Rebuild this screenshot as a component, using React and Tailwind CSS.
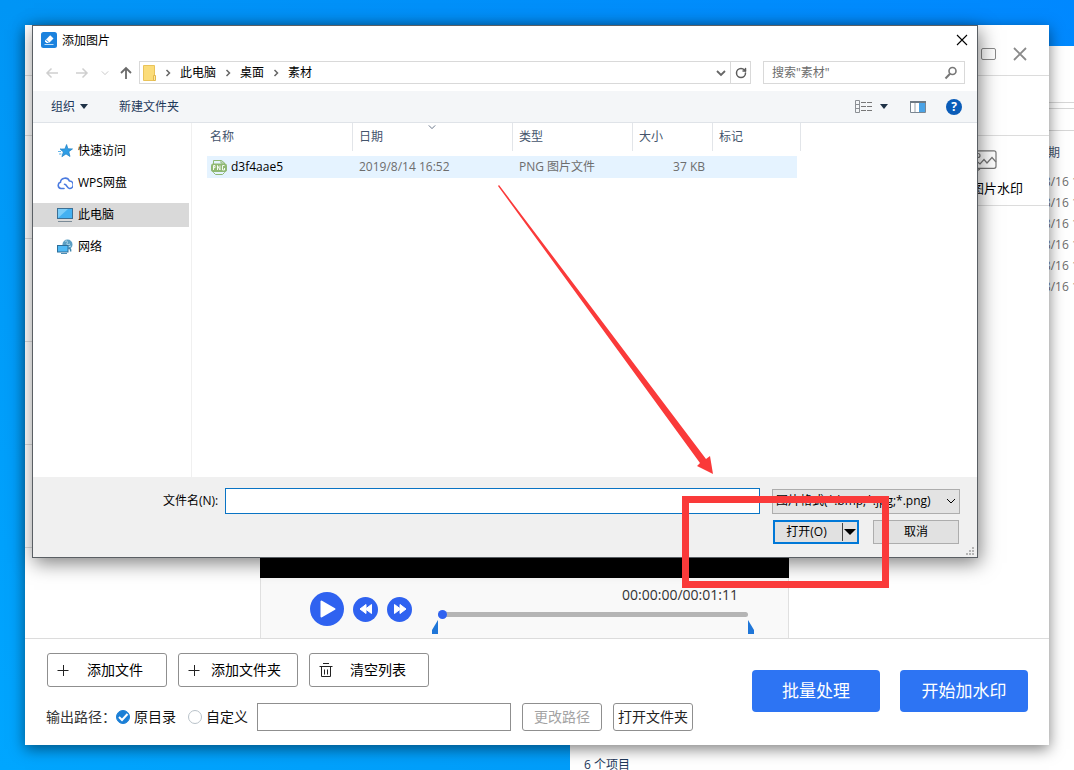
import { RotateCw } from 'lucide-react';

const files = [{ name: 'd3f4aae5', date: '2019/8/14 16:52', type: 'PNG 图片文件', size: '37 KB' }];

const explorerRows = ['16:52', '16:51', '16:50', '16:48', '16:45', '16:42'];

const sidebarItems = [
  { label: '快速访问', icon: 'star' },
  { label: 'WPS网盘', icon: 'cloud' },
  { label: '此电脑', icon: 'pc', active: true },
  { label: '网络', icon: 'network' },
];

const SidebarIcon = ({ name }) => {
  if (name === 'star') {
    return (
      <svg viewBox="0 0 16 16" className="h-4 w-4">
        <path d="M9.6 1.5l1.3 4.3 4.6.1-3.7 2.8 1.2 4.8-4-2.6-4.1 2.8 1.5-4.8L3 6.100l4.900-.2z" fill="#2f9ee6" stroke="#1c7fc4" strokeWidth=".7" />
        <path d="M1 8.500h3M2 11h2.500M3 6h1" stroke="#63b5ea" />
      </svg>
    );
  }
  if (name === 'cloud') {
    return (
      <svg viewBox="0 0 16 16" className="h-4 w-4" fill="none" stroke="#4b7be0" strokeWidth="1.6" strokeLinecap="round">
        <path d="M7 13.500H4A3.200 3.200 0 0 1 3.400 7.300 4.700 4.700 0 0 1 12.400 6 3.700 3.700 0 0 1 12.500 13.500C10 13.500 10 9.300 7.500 9.300" />
      </svg>
    );
  }
  if (name === 'pc') {
    return (
      <svg viewBox="0 0 16 16" className="h-4 w-4">
        <rect x=".5" y="1.500" width="15" height="10" fill="#43b1f2" stroke="#3c6f94" />
        <path d="M1 11V2h10z" fill="#7bcdf9" />
        <path d="M1 14.500h14" stroke="#7a8a96" />
      </svg>
    );
  }
  return (
    <svg viewBox="0 0 16 16" className="h-4 w-4">
      <circle cx="10.500" cy="5.500" r="5" fill="#5b9fc4" />
      <path d="M8 2.500c2-1.500 3 .5 2 2s2 1.500 3 .5M11 8l3-1" stroke="#b9dff0" fill="none" />
      <path d="M12 9.500c1.500 0 2 1 1.500 3" stroke="#3f86ad" fill="none" strokeWidth="1.500" />
      <rect x=".5" y="6.500" width="10.500" height="6.500" fill="#4fb9f5" stroke="#2f6f99" />
      <path d="M4 14.500h6" stroke="#4a8db5" />
    </svg>
  );
};

const Chevron = ({ className }) => (
  <svg viewBox="0 0 10 10" className={className} fill="none" stroke="currentColor">
    <path d="M1 3l4 4 4-4" />
  </svg>
);

const Caret = () => (
  <svg viewBox="0 0 8 5" className="h-[5px] w-2" fill="#1f3247">
    <path d="M0 0h8L4 5z" />
  </svg>
);

const Crumb = ({ children }) => (
  <>
    <svg viewBox="0 0 6 8" className="mx-[9px] h-2 w-1.5 shrink-0" fill="none" stroke="#666" strokeWidth="1.500">
      <path d="M1.500 1l3 3-3 3" />
    </svg>
    <button type="button" className="whitespace-nowrap">{children}</button>
  </>
);

const ExplorerWindow = () => (
  <section className="absolute top-[46px] right-0 bottom-0 left-[570px] flex flex-col overflow-hidden bg-white text-xs">
    <div className="h-14 shrink-0" />
    <div className="h-[7px] shrink-0 border-y border-[#d6d6d6]" />
    <div className="h-[22px] shrink-0 border-b border-[#d6d6d6]" />
    <table className="mt-3 ml-[442px] table-fixed border-collapse text-left whitespace-nowrap text-[#6d6d6d]">
      <thead>
        <tr className="h-[19px] text-[#44546c]">
          <th className="p-0 font-normal">修改日期</th>
        </tr>
      </thead>
      <tbody>
        <tr className="h-[9px]" />
        {explorerRows.map((time) => (
          <tr key={time} className="h-[21px]">
            <td className="p-0">2019/8/16 {time}</td>
          </tr>
        ))}
      </tbody>
    </table>
    <div className="mt-auto h-3.5 shrink-0 pl-3.5 leading-[18px] text-[#1e395b]">6 个项目</div>
  </section>
);

const Player = () => (
  <div className="flex flex-1 flex-col">
    <div className="flex-1 bg-black" />
    <div className="flex h-[60px] border-x border-[#e0e0e0] bg-[#f9f9f9] pr-[34px] pl-[49px]">
      <div className="flex items-center gap-[9px] pt-0.5">
        <button type="button" aria-label="播放" className="flex h-[34px] w-[34px] items-center justify-center rounded-full bg-[#2f62f0]">
          <svg viewBox="0 0 16 18" className="ml-0.5 h-[18px] w-4" fill="#fff" stroke="#fff" strokeWidth="2" strokeLinejoin="round">
            <path d="M1.500 1.500v15L14.500 9z" />
          </svg>
        </button>
        <button type="button" aria-label="快退" className="flex h-[25px] w-[25px] items-center justify-center rounded-full bg-[#2f62f0]">
          <svg viewBox="0 0 14 10" className="h-2.5 w-3.5" fill="#fff" stroke="#fff" strokeLinejoin="round">
            <path d="M7 .5v9L1 5zM12.500.5v9L6.500 5z" />
          </svg>
        </button>
        <button type="button" aria-label="快进" className="flex h-[25px] w-[25px] items-center justify-center rounded-full bg-[#2f62f0]">
          <svg viewBox="0 0 14 10" className="h-2.5 w-3.5" fill="#fff" stroke="#fff" strokeLinejoin="round">
            <path d="M1.500.5v9l6-4.500zM7 .5v9L13 5z" />
          </svg>
        </button>
      </div>
      <div className="ml-5 flex flex-1 flex-col pt-[7px]">
        <div className="pr-4 text-right text-sm leading-5 text-[#333]">00:00:00/00:01:11</div>
        <div className="flex px-1.5 pt-[3px]">
          <input
            type="range"
            aria-label="播放进度"
            defaultValue="0"
            className="h-3 w-full appearance-none bg-transparent [&::-webkit-slider-runnable-track]:h-[5px] [&::-webkit-slider-runnable-track]:rounded-full [&::-webkit-slider-runnable-track]:bg-[#b5b5b5] [&::-webkit-slider-thumb]:-mt-0.5 [&::-webkit-slider-thumb]:h-[9px] [&::-webkit-slider-thumb]:w-[9px] [&::-webkit-slider-thumb]:appearance-none [&::-webkit-slider-thumb]:rounded-full [&::-webkit-slider-thumb]:bg-[#2f62f0]"
          />
        </div>
        <div className="flex justify-between">
          <svg viewBox="0 0 6 14" className="h-3.5 w-1.5" fill="#1f76d8">
            <path d="M6 0v14H0v-4z" />
          </svg>
          <svg viewBox="0 0 6 14" className="h-3.5 w-1.5" fill="#1f76d8">
            <path d="M0 0v14h6v-4z" />
          </svg>
        </div>
      </div>
    </div>
  </div>
);

const ToolButton = ({ icon, children }) => (
  <button type="button" className="flex h-[34px] w-[120px] items-center rounded-[3px] border border-[#8f8f8f] bg-white pl-2 text-sm">
    {icon}
    <span className="flex-1 pr-1.5 text-center">{children}</span>
  </button>
);

const PlusIcon = () => (
  <svg viewBox="0 0 14 14" className="h-3.5 w-3.5 shrink-0" stroke="#222">
    <path d="M1.500 7.500h11M7.500 2v11" />
  </svg>
);

const TrashIcon = () => (
  <svg viewBox="0 0 16 16" className="h-4 w-4 shrink-0" fill="none" stroke="#222">
    <path d="M5 1.500h6M1.500 4.500h13M3.500 4.500v10h9v-10M6.500 7.500v5M9.500 7.500v5" />
  </svg>
);

const radioClass =
  'h-3.5 w-3.5 shrink-0 appearance-none rounded-full border border-[#b9c2c9] bg-white';

const AppWindow = () => (
  <section className="absolute inset-[25px] flex flex-col bg-white shadow-[0_4px_14px_rgba(0,0,0,0.5)]">
    <div className="flex h-[51px] shrink-0 items-center justify-end gap-[17px] border-b border-[#dcdcdc] pt-2 pr-[22px]">
      <button type="button" aria-label="最大化" className="h-3 w-[15px] rounded-xs border border-[#8a8a8a]" />
      <button type="button" aria-label="关闭" className="text-[#8a8a8a]">
        <svg viewBox="0 0 14 14" className="h-3.5 w-3.5" stroke="currentColor" strokeWidth="1.800">
          <path d="M1 1l12 12M13 1L1 13" />
        </svg>
      </button>
    </div>
    <div className="h-[60px] shrink-0 border-b border-[#dcdcdc]" />
    <div className="flex flex-1">
      <div className="w-[235px]">
        {[1, 2, 3, 4].map((row) => (
          <div key={row} className="h-[103px] border-b border-[#dcdcdc]" />
        ))}
      </div>
      <Player />
      <div className="w-[260px]">
        <div className="flex h-[70px] justify-end border-b border-[#dcdcdc] pr-[26px]">
          <button type="button" className="flex flex-col items-start pt-3.5 text-[13px] text-black">
            <svg viewBox="0 0 26 22" className="h-[22px] w-[26px]" fill="none" stroke="#777" strokeWidth="1.200">
              <rect x="1" y=".8" width="24" height="17.500" rx="2" />
              <circle cx="7" cy="5.500" r="2" />
              <path d="M3 9l6 5 4-4.500 3 3.500 5-5.500 4 4.500M5 21.500l4-2.500" />
            </svg>
            <span className="mt-1.5 leading-5">图片水印</span>
          </button>
        </div>
      </div>
    </div>
    <div className="flex shrink-0 justify-between border-t border-[#dcdcdc] px-[21px] py-3.5">
      <div className="flex flex-col gap-4">
        <div className="flex gap-[11px] pl-px">
          <ToolButton icon={<PlusIcon />}>添加文件</ToolButton>
          <ToolButton icon={<PlusIcon />}>添加文件夹</ToolButton>
          <ToolButton icon={<TrashIcon />}>清空列表</ToolButton>
        </div>
        <div className="flex h-7 items-center text-sm text-[#111]">
          <span className="text-[#333]">输出路径：</span>
          <label className="flex items-center gap-1">
            <span className="relative flex">
              <input type="radio" name="output" defaultChecked className={`${radioClass} checked:border-[#1b7fd6] checked:bg-[#1b7fd6]`} />
              <svg viewBox="0 0 14 14" className="pointer-events-none absolute inset-0 h-3.5 w-3.5" fill="none" stroke="#fff" strokeWidth="2">
                <path d="M3 7l3 3 5.500-6" />
              </svg>
            </span>
            原目录
          </label>
          <label className="ml-3 flex items-center gap-1">
            <input type="radio" name="output" className={radioClass} />
            自定义
          </label>
          <input type="text" aria-label="输出路径" className="ml-[9px] h-7 w-[254px] border border-[#8f8f8f] px-2" />
          <button type="button" disabled className="ml-[11px] h-7 w-20 rounded-[3px] border border-[#8f8f8f] text-[#a3a3a3]">
            更改路径
          </button>
          <button type="button" className="ml-[11px] h-7 w-20 rounded-[3px] border border-[#8f8f8f] whitespace-nowrap text-[#222]">
            打开文件夹
          </button>
        </div>
      </div>
      <div className="flex gap-5 pt-[17px] text-[17px] text-white">
        <button type="button" className="h-[42px] w-32 rounded bg-[#2d74f3]">批量处理</button>
        <button type="button" className="h-[42px] w-32 rounded bg-[#2d74f3]">开始加水印</button>
      </div>
    </div>
  </section>
);

const DialogHeader = () => (
  <>
    <div className="flex h-7 shrink-0 items-center pr-[9px] pl-2">
      <svg viewBox="0 0 16 16" className="h-4 w-4">
        <rect width="16" height="16" rx="2.500" fill="#1b82de" />
        <path d="M4 8.500L9.200 3.300l3.300 3.300-4.500 4.400H5.500L4 9.500z" fill="#fff" />
        <path d="M5 7.700l3 3" stroke="#1b82de" />
        <path d="M3.500 12.500h9" stroke="#bfe0fa" />
      </svg>
      <h1 className="ml-[5px] pt-0.5 text-xs">添加图片</h1>
      <button type="button" aria-label="关闭" className="ml-auto">
        <svg viewBox="0 0 12 12" className="h-3 w-3" stroke="#000" strokeWidth="1.100">
          <path d="M1 1l10 10M11 1L1 11" />
        </svg>
      </button>
    </div>
    <div className="flex h-[37px] shrink-0 items-center px-3">
      <button type="button" aria-label="后退" disabled>
        <svg viewBox="0 0 14 12" className="h-3 w-3.5" fill="none" stroke="#cfcfcf" strokeWidth="1.500">
          <path d="M13 6H2M6.500 1.500L2 6l4.500 4.500" />
        </svg>
      </button>
      <button type="button" aria-label="前进" disabled className="ml-4">
        <svg viewBox="0 0 14 12" className="h-3 w-3.5" fill="none" stroke="#cfcfcf" strokeWidth="1.500">
          <path d="M1 6h11M7.500 1.500L12 6l-4.500 4.500" />
        </svg>
      </button>
      <button type="button" aria-label="最近位置" disabled className="ml-3 text-[#bdbdbd]">
        <Chevron className="h-2 w-2" />
      </button>
      <button type="button" aria-label="上移" className="ml-[11px]">
        <svg viewBox="0 0 12 14" className="h-3.5 w-3" fill="none" stroke="#6a6a6a" strokeWidth="1.800">
          <path d="M6 13V2M1 7l5-5 5 5" />
        </svg>
      </button>
      <div className="ml-[7px] flex h-[23px] flex-1 items-center border border-[#d9d9d9] text-xs">
        <svg viewBox="0 0 13 16" className="ml-[3px] h-4 w-[13px] shrink-0">
          <path d="M.5.5h11v15H.5z" fill="#fbdc79" stroke="#e9c35a" />
          <path d="M10.500 10.500h2v5h-2z" fill="#fce9a6" stroke="#e3b84c" />
        </svg>
        <Crumb>此电脑</Crumb>
        <Crumb>桌面</Crumb>
        <Crumb>素材</Crumb>
        <button type="button" aria-label="展开" className="mr-1 ml-auto text-[#666]">
          <svg viewBox="0 0 10 8" className="h-2 w-2.5" fill="none" stroke="currentColor" strokeWidth="1.800">
            <path d="M1 2l4 4 4-4" />
          </svg>
        </button>
        <button type="button" aria-label="刷新" className="flex h-full w-5 items-center justify-center border-l border-[#d9d9d9]">
          <RotateCw className="h-3 w-3 text-[#5d5d5d]" strokeWidth={3} />
        </button>
      </div>
      <div className="ml-3 flex h-[23px] w-[202px] items-center border border-[#d9d9d9] pr-1.5 pl-2">
        <input type="text" aria-label="搜索" placeholder={'搜索"素材"'} className="min-w-0 flex-1 text-xs outline-none placeholder:text-[#6d6d6d]" />
        <svg viewBox="0 0 14 14" className="h-3.5 w-3.5" fill="none" stroke="#777">
          <circle cx="8.500" cy="5" r="3.500" strokeWidth="1.600" />
          <path d="M6 7.800l-4.500 4.700" strokeWidth="2" />
        </svg>
      </div>
    </div>
    <div className="flex h-8 shrink-0 items-center border-b border-[#dfe3e8] bg-[#f4f6f8] pr-[15px] pl-[18px] text-xs text-[#1e395b]">
      <button type="button" className="flex items-center gap-[5px]">
        组织
        <Caret />
      </button>
      <button type="button" className="ml-[31px]">新建文件夹</button>
      <button type="button" aria-label="更改视图" className="ml-auto flex items-center gap-2">
        <svg viewBox="0 0 17 13" className="h-[13px] w-[17px]" fill="none" stroke="#8b8f94">
          <path d="M.5.5h4v12h-4zM.5 4.500h4M.5 8.500h4" />
          <path d="M6 2.500h5M6 6.500h5M6 10.500h5M12 2.500h5M12 6.500h5M12 10.500h5" stroke="#777" />
        </svg>
        <Caret />
      </button>
      <button type="button" aria-label="预览窗格" className="ml-[22px]">
        <svg viewBox="0 0 16 12" className="h-3 w-4">
          <path d="M.5.5h15v11H.5z" fill="#fff" stroke="#7b8792" />
          <path d="M0 1h16" stroke="#6f7a84" strokeWidth="2" />
          <path d="M5 2v9" stroke="#9aa3ab" />
          <path d="M9 2h6v9H9z" fill="#4aa3e6" />
        </svg>
      </button>
      <button type="button" aria-label="帮助" className="ml-5 flex h-4 w-4 items-center justify-center rounded-full bg-[#0a5cb8] text-xs leading-4 font-bold text-white">
        ?
      </button>
    </div>
  </>
);

const FileTable = () => (
  <table className="ml-[15px] h-fit w-[594px] table-fixed border-separate border-spacing-0 text-left text-xs whitespace-nowrap">
    <colgroup>
      <col className="w-[146px]" />
      <col className="w-40" />
      <col className="w-[120px]" />
      <col className="w-20" />
      <col className="w-[88px]" />
    </colgroup>
    <thead>
      <tr className="h-7 text-[#44546c] [&>th]:border-r [&>th]:border-[#e2e5e9] [&>th]:p-0 [&>th]:font-normal">
        <th><div className="pl-[3px]">名称</div></th>
        <th>
          <div className="relative pl-1.5">
            日期
            <Chevron className="absolute -top-1.5 left-[75px] h-2 w-2" />
          </div>
        </th>
        <th><div className="pl-1.5">类型</div></th>
        <th><div className="pl-1.5">大小</div></th>
        <th><div className="pl-1.5">标记</div></th>
      </tr>
    </thead>
    <tbody className="text-[#6d6d6d]">
      {files.map((file) => (
        <tr key={file.name} className="[&>td]:p-0 [&>td]:pt-[5px]">
          <td>
            <div className="flex h-[22px] items-center gap-1 bg-[#e5f3ff] pl-1 text-black">
              <svg viewBox="0 0 16 16" className="h-4 w-4" fill="none" stroke="#8fb873">
                <path d="M2.500 5V1.500h8L13.500 4v1M2.500 12v1.500l2 2h7l2-2V12M10 1.500V4h3.500" />
                <rect x=".5" y="5" width="15" height="7.500" rx="1.500" fill="#8fb873" />
                <path d="M2.500 11V6.500h1.500v2.200H2.500M6.500 11V6.500L9 11V6.500M13.500 6.500h-2V11h2V9" stroke="#fff" strokeWidth=".9" />
              </svg>
              {file.name}
            </div>
          </td>
          <td><div className="h-[22px] bg-[#e5f3ff] pl-1.5 leading-[22px]">{file.date}</div></td>
          <td><div className="h-[22px] bg-[#e5f3ff] pl-1.5 leading-[22px]">{file.type}</div></td>
          <td><div className="h-[22px] bg-[#e5f3ff] pr-2 text-right leading-[22px]">{file.size}</div></td>
          <td><div className="mr-1 h-[22px] bg-[#e5f3ff]" /></td>
        </tr>
      ))}
    </tbody>
  </table>
);

const DialogFooter = () => (
  <div className="relative flex h-20 shrink-0 flex-col gap-1.5 bg-[#f0f0f0] pt-[11px] pr-[17px] text-xs">
    <div className="flex items-center pl-[130px]">
      <label htmlFor="file-name">文件名(N):</label>
      <div className="ml-[7px] flex h-[26px] flex-1 items-center border border-[#0a74c4] bg-white pr-1">
        <input id="file-name" type="text" className="h-full min-w-0 flex-1 px-1 outline-none" />
        <Chevron className="h-2 w-2" />
      </div>
      <div className="relative ml-3">
        <select aria-label="文件类型" className="h-[25px] w-[188px] appearance-none border border-[#adadad] bg-[#e3e3e3] pl-[3px]">
          <option>图片格式(*.bmp;*.jpg;*.png)</option>
        </select>
        <Chevron className="pointer-events-none absolute top-[7px] right-1 h-2.5 w-2.5" />
      </div>
    </div>
    <div className="flex justify-end gap-3.5 pr-px">
      <div className="flex h-6 w-[86px] items-center border-2 border-[#0078d7] bg-[#e1e1e1]">
        <button type="button" className="flex-1 pr-1">打开(O)</button>
        <button type="button" aria-label="打开方式" className="flex h-[18px] w-[15px] items-center justify-center border-l border-[#444]">
          <svg viewBox="0 0 12 6" className="h-1.5 w-3">
            <path d="M0 0h12L6 6z" />
          </svg>
        </button>
      </div>
      <button type="button" className="h-6 w-[86px] border border-[#adadad] bg-[#e1e1e1]">取消</button>
    </div>
    <svg viewBox="0 0 8 8" className="absolute right-[3px] bottom-0.5 h-2 w-2" fill="#b5b5b5">
      <path d="M6 0h2v2H6zM3 3h2v2H3zM6 3h2v2H6zM0 6h2v2H0zM3 6h2v2H3zM6 6h2v2H6z" />
    </svg>
  </div>
);

const OpenDialog = () => (
  <section className="absolute top-[25px] right-[96px] left-8 flex h-[533px] flex-col border border-[#5a5f64] bg-white text-black shadow-[2px_5px_18px_rgba(0,0,0,0.5)]">
    <DialogHeader />
    <div className="flex flex-1">
      <nav className="flex w-[159px] shrink-0 flex-col gap-2 border-r border-[#f0f0f0] pt-4 pr-0.5 text-xs">
        {sidebarItems.map((item) => (
          <button
            key={item.label}
            type="button"
            className={`flex h-6 items-center gap-[5px] pl-6 ${item.active ? 'bg-[#d9d9d9]' : ''}`}
          >
            <SidebarIcon name={item.icon} />
            {item.label}
          </button>
        ))}
      </nav>
      <FileTable />
    </div>
    <DialogFooter />

    {/* red arrow and frame pointing at the open button */}
    <svg viewBox="0 0 215 289" className="pointer-events-none absolute top-[159px] right-[264px] h-[289px] w-[215px]" fill="#fa3a3a">
      <path d="M0 1L1 0L208 274l4-3 3 18-16-8 3-3z" />
    </svg>
    <div className="pointer-events-none absolute right-[88px] -bottom-[31px] h-[92px] w-[207px] border-[7px] border-[#fa3a3a]" />
  </section>
);

const App = () => {
  return (
    <main className="relative h-screen overflow-hidden bg-linear-to-tr from-[#00a6ff] via-[#0095f5] to-[#0088ff] font-['Open_Sans','Noto_Sans_CJK_SC',sans-serif]">
      <ExplorerWindow />
      <AppWindow />
      <OpenDialog />
    </main>
  );
};

export default App;
